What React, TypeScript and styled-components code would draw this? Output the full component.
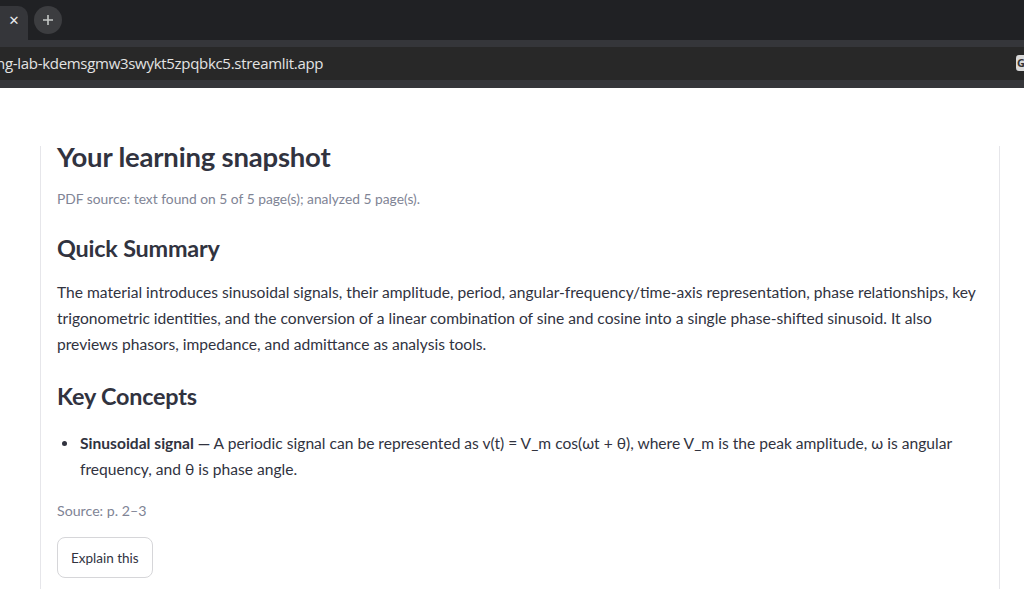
import React from "react";
import styled, { createGlobalStyle } from "styled-components";

const Global = createGlobalStyle`
  html, body { margin: 0; padding: 0; background: #ffffff; }
  body { font-family: Lato, "Liberation Sans", sans-serif; overflow: hidden; }
  * { box-sizing: border-box; }
`;

const Frame = styled.div`
  width: 1024px;
  height: 589px;
  display: flex;
  flex-direction: column;
  overflow: hidden;
`;

const TabStrip = styled.div`
  height: 40px;
  background: #202124;
  display: flex;
  align-items: flex-end;
  gap: 6px;
`;

const Tab = styled.div`
  width: 28px;
  height: 34px;
  background: #35363a;
  border-top-right-radius: 10px;
  display: flex;
  align-items: center;
  justify-content: center;
  padding-bottom: 6px;
  color: #e8eaed;
  font-family: "DejaVu Sans", sans-serif;
  font-size: 13px;
`;

const NewTab = styled.div`
  width: 28px;
  height: 28px;
  margin-bottom: 6px;
  border-radius: 50%;
  background: #3c3d40;
  display: flex;
  align-items: center;
  justify-content: center;
`;

const Toolbar = styled.div`
  height: 48px;
  background: #35363a;
  padding: 7px 0 8px;
  display: flex;
`;

const AddressBar = styled.div`
  flex: 1;
  background: #282828;
  display: flex;
  align-items: center;
  justify-content: space-between;
  color: #e3e3e3;
  font-family: "Open Sans", sans-serif;
  font-size: 15px;
  letter-spacing: -0.3px;
  padding-bottom: 1px;
`;

const UrlText = styled.span`
  margin-left: -4px;
`;

const SiteIcon = styled.div`
  width: 8px;
  height: 16px;
  background: #d9d9d9;
  border-radius: 3px 0 0 3px;
  color: #333;
  font-size: 11px;
  font-weight: 700;
  overflow: hidden;
  padding-left: 1px;
  line-height: 16px;
`;

const Page = styled.div`
  flex: 1;
  padding: 58px 24px 0 40px;
  display: flex;
`;

const Card = styled.section`
  flex: 1;
  border-left: 1px solid #e6e6ea;
  border-right: 1px solid #e6e6ea;
  padding: 0 14px 0 16px;
  color: #31333f;
  display: flex;
  flex-direction: column;
  align-items: flex-start;
`;

const Title = styled.h2`
  margin: -7px 0 0;
  font-size: 27.5px;
  font-weight: 700;
  line-height: 36px;
  letter-spacing: -0.2px;
`;

const Caption = styled.p`
  margin: 14px 0 0;
  font-size: 13.8px;
  line-height: 20px;
  color: #808495;
`;

const SectionHeading = styled.h3<{ $gap: number }>`
  margin: ${(p) => p.$gap}px 0 0;
  font-size: 23.4px;
  font-weight: 700;
  line-height: 30px;
  letter-spacing: -0.2px;
`;

const Paragraph = styled.p`
  margin: 16px 0 0;
  font-size: 15.6px;
  line-height: 26px;
`;

const List = styled.ul`
  margin: 19px 0 0;
  padding-left: 23px;
  list-style: none;
  font-size: 15.6px;
  line-height: 26px;
`;

const Item = styled.li`
  position: relative;
  &::before {
    content: "";
    position: absolute;
    left: -18px;
    top: 11px;
    width: 5px;
    height: 5px;
    border-radius: 50%;
    background: #31333f;
  }
`;

const Strong = styled.strong`
  font-weight: 700;
`;

const SourceNote = styled.p`
  margin: 19px 0 0;
  font-size: 14.2px;
  line-height: 20px;
  color: #808495;
`;

const Button = styled.button`
  margin-top: 16px;
  height: 41px;
  padding: 0 13px;
  background: #ffffff;
  border: 1px solid #d6d6d9;
  border-radius: 8px;
  color: #31333f;
  font-family: Lato, sans-serif;
  font-size: 13.5px;
`;

export default function App() {
  return (
    <Frame>
      <Global />
      <TabStrip>
        <Tab>✕</Tab>
        <NewTab>
          <svg width="12" height="12" viewBox="0 0 12 12">
            <path d="M6 1v10M1 6h10" stroke="#c4c7c5" strokeWidth="1.6" />
          </svg>
        </NewTab>
      </TabStrip>
      <Toolbar>
        <AddressBar>
          <UrlText>ng-lab-kdemsgmw3swykt5zpqbkc5.streamlit.app</UrlText>
          <SiteIcon>G</SiteIcon>
        </AddressBar>
      </Toolbar>
      <Page>
        <Card>
          <Title>Your learning snapshot</Title>
          <Caption>PDF source: text found on 5 of 5 page(s); analyzed 5 page(s).</Caption>
          <SectionHeading $gap={24}>Quick Summary</SectionHeading>
          <Paragraph>
            The material introduces sinusoidal signals, their amplitude, period, angular-frequency/time-axis representation, phase relationships, key trigonometric identities, and the conversion of a linear combination of sine and cosine into a single phase-shifted sinusoid. It also previews phasors, impedance, and admittance as analysis tools.
          </Paragraph>
          <SectionHeading $gap={24}>Key Concepts</SectionHeading>
          <List>
            <Item>
              <Strong>Sinusoidal signal —</Strong> A periodic signal can be represented as v(t) = V_m cos(ωt + θ), where V_m is the peak amplitude, ω is angular frequency, and θ is phase angle.
            </Item>
          </List>
          <SourceNote>Source: p. 2–3</SourceNote>
          <Button>Explain this</Button>
        </Card>
      </Page>
    </Frame>
  );
}
